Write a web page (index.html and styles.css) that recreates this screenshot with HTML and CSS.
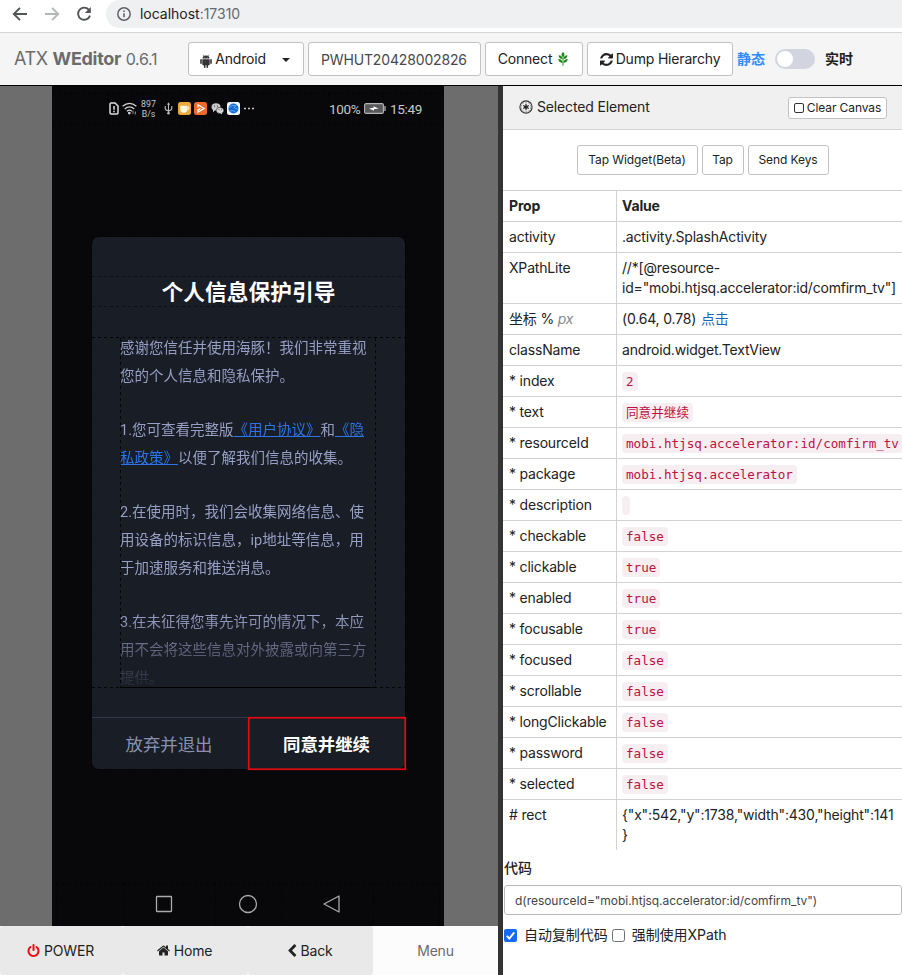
FILE: index.html
```html
<!DOCTYPE html>
<html lang="zh-CN">
<head>
<meta charset="utf-8">
<title>ATX WEditor</title>
<link rel="stylesheet" href="styles.css">
</head>
<body>
<div class="browser">
  <svg class="nav-icon" viewBox="0 0 16 16"><path d="M15 8H2M8 1.8 1.8 8 8 14.2" fill="none" stroke="#505357" stroke-width="1.9"/></svg>
  <svg class="nav-icon" viewBox="0 0 16 16"><path d="M1 8h13M8 1.8 14.2 8 8 14.2" fill="none" stroke="#b4b6b8" stroke-width="1.9"/></svg>
  <svg class="nav-icon" viewBox="0 0 16 16"><path d="M13.2 4.2A6.1 6.1 0 1 0 14 9.6" fill="none" stroke="#505357" stroke-width="1.9"/><path d="M14.8 1v6H8.8z" fill="#505357"/></svg>
  <div class="address">
    <svg class="info" viewBox="0 0 16 16"><circle cx="8" cy="8" r="6.2" fill="none" stroke="#5f6368" stroke-width="1.5"/><path d="M8 7.2v4M8 4.5v1.6" stroke="#5f6368" stroke-width="1.6"/></svg>
    <span class="host">localhost<span class="port">:17310</span></span>
  </div>
</div>
<div class="toolbar">
  <div class="brand">ATX <b>WEditor</b> <small>0.6.1</small></div>
  <button class="btn android">
    <svg class="ic-android" viewBox="0 0 12 14"><path d="M2.5 4.6a3.5 3.2 0 0 1 7 0zM2.3 5.2h7.4v5.3a.8.8 0 0 1-.8.8h-.8v1.9a.8.8 0 0 1-1.6 0v-1.9h-1v1.9a.8.8 0 0 1-1.6 0v-1.9h-.8a.8.8 0 0 1-.8-.8zM.2 5.9a.8.8 0 0 1 1.600 0v3.400a.8.8 0 0 1-1.600 0zM10.200 5.900a.8.8 0 0 1 1.600 0v3.400a.8.8 0 0 1-1.600 0z" fill="#333"/><path d="M3.200.7l1 1.500M8.800.7l-1 1.500" stroke="#333" stroke-width=".6"/><circle cx="4.500" cy="3.200" r=".35" fill="#fff"/><circle cx="7.500" cy="3.200" r=".35" fill="#fff"/></svg>
    <span>Android</span><i class="caret"></i>
  </button>
  <div class="serial">PWHUT20428002826</div>
  <button class="btn connect"><span>Connect</span>
    <svg class="ic-leaf" viewBox="1 0 10 15"><g fill="#1a8a16"><path d="M6 0c2.200 2 2.200 3.800 0 5.500C3.800 3.800 3.800 2 6 0z"/><path d="M1.300 3.600c2.700.1 4 1.600 4.200 4C2.800 7.400 1.300 6 1.300 3.600zM10.700 3.600c-2.700.1-4 1.600-4.200 4 2.700-.2 4.200-1.600 4.200-4zM1 7.600c2.900.1 4.300 1.500 4.500 4.200C2.700 11.700 1 10.100 1 7.600zM11 7.600c-2.900.1-4.300 1.500-4.500 4.200 2.800-.1 4.500-1.700 4.500-4.200z"/></g><path d="M6 5v9.700" stroke="#1a8a16"/></svg>
  </button>
  <button class="btn dump">
    <svg class="ic-fa" viewBox="0 0 1536 1536"><path transform="matrix(1 0 0 -1 0 1408)" d="M1511 480q0 -5 -1 -7q-64 -268 -268 -434.500t-478 -166.500q-146 0 -282.500 55t-243.500 157l-129 -129q-19 -19 -45 -19t-45 19t-19 45v448q0 26 19 45t45 19h448q26 0 45 -19t19 -45t-19 -45l-137 -137q71 -66 161 -102t187 -36q134 0 250 65t186 179q11 17 53 117q8 23 30 23h192q13 0 22.500 -9.500t9.500 -22.500zM1536 1280v-448q0 -26 -19 -45t-45 -19h-448q-26 0 -45 19t-19 45t19 45l138 138q-148 137 -349 137q-134 0 -250 -65t-186 -179q-11 -17 -53 -117q-8 -23 -30 -23h-199q-13 0 -22.500 9.500t-9.500 22.500v7q65 268 270 434.500t480 166.500q146 0 284 -55.500t245 -156.500l130 129q19 19 45 19t45 -19t19 -45z" fill="#222"/></svg>
    <span>Dump Hierarchy</span>
  </button>
  <span class="mode active">静态</span><span class="switch"></span><span class="mode">实时</span>
</div>
<main class="main">
  <section class="left">
    <div class="stage">
      <div class="phone">
        <div class="status">
          <svg class="s-sim" viewBox="0 0 10 13"><path d="M1 2.200Q1 1 2.200 1H6L9 4v6.800Q9 12 7.800 12H2.200Q1 12 1 10.800z" fill="none" stroke="#ddd" stroke-width="1.500"/><path d="M5 4v3.700M5 8.700v1.500" stroke="#ddd" stroke-width="1.500"/></svg>
          <svg class="s-wifi" viewBox="0 0 15 13"><path d="M.6 4.300Q7.500-1.500 14.400 4.300M2.700 6.900Q7.500 2.800 12.300 6.900M4.900 9.200Q7.500 7 10 9.200" fill="none" stroke="#d0d0d0" stroke-width="1.300"/><circle cx="7.300" cy="11.100" r="1.400" fill="#d0d0d0"/><path d="M11 8.800v3M13.300 9.500v3" stroke="#999"/></svg>
          <div class="speed">897<br>B/s</div>
          <svg class="s-usb" viewBox="0 0 9 13"><path d="M4.500 1v10M1.200 4v2.500q0 1.500 3.300 2.500M7.800 4v2.500q0 1.500-3.300 2.500" fill="none" stroke="#bbb" stroke-width="1.100"/><circle cx="4.500" cy="11.300" r="1.300" fill="#bbb"/><path d="M3 2.700 4.500.3 6 2.700z" fill="#bbb"/></svg>
          <svg class="s-app" viewBox="0 0 13 13"><rect width="13" height="13" rx="2.500" fill="#eda83c"/><path d="M2.300 3.800h7v3.700q0 3.200-3.500 3.200T2.300 7.500z" fill="#fff6dd"/><path d="M9 5h1.800v2.200H9" fill="none" stroke="#fff6dd"/></svg>
          <svg class="s-app" viewBox="0 0 13 13"><rect width="13" height="13" rx="2.500" fill="#ee6a2b"/><path d="M4 5.500V2.800l6 3.700-6 3.700V7.800l2.500-1.300" fill="none" stroke="#fff" stroke-width="1.300"/></svg>
          <svg class="s-app" viewBox="0 0 13 13"><ellipse cx="5" cy="4.900" rx="4.500" ry="3.700" fill="#c9c9c9"/><ellipse cx="9" cy="8.500" rx="3.800" ry="3.100" fill="#d8d8d8" stroke="#09090b" stroke-width=".5"/><path d="M2 8v2.500L4 8zM11 11v1.500L9 11z" fill="#ccc"/><g fill="#222"><circle cx="3.500" cy="4" r=".6"/><circle cx="6.500" cy="4" r=".6"/><circle cx="8" cy="7.800" r=".5"/><circle cx="10.300" cy="7.800" r=".5"/></g></svg>
          <svg class="s-app" viewBox="0 0 13 13"><rect width="13" height="13" rx="2.500" fill="#f2f6fa"/><circle cx="6.500" cy="6.500" r="5" fill="#176bd0"/><path d="M2 5.500q3-3 7-2l-2 2 4 2M3 9q3-1.500 5.500 1" fill="none" stroke="#73b6f0" stroke-width=".8"/></svg>
          <svg class="s-dots" viewBox="0 0 10 3"><path d="M0 1.500h2M4 1.500h2M8 1.500h2" stroke="#ccc" stroke-width="1.400"/></svg>
          <span class="pct">100%</span>
          <svg class="s-batt" viewBox="0 0 22 11"><rect x=".6" y=".6" width="18.800" height="9.800" rx="1.500" fill="#58585a" stroke="#b5b5b5" stroke-width="1.100"/><path d="M21 3v5" stroke="#b5b5b5" stroke-width="1.300"/><path d="M5 5.500 9.500 4.800V3.200L14.500 5.500 10 6.200v1.600z" fill="#fff"/></svg>
          <span class="clock">15:49</span>
        </div>
        <div class="dialog">
          <h2 class="title">个人信息保护引导</h2>
          <div class="terms">
            <p>感谢您信任并使用海豚！我们非常重视<br>您的个人信息和隐私保护。</p>
            <p>1.您可查看完整版<a>《用户协议》</a>和<a>《隐<br>私政策》</a>以便了解我们信息的收集。</p>
            <p>2.在使用时，我们会收集网络信息、使<br>用设备的标识信息，ip地址等信息，用<br>于加速服务和推送消息。</p>
            <p>3.在未征得您事先许可的情况下，本应<br>用不会将这些信息对外披露或向第三方<br>提供。</p>
          </div>
          <div class="choices"><div class="decline">放弃并退出</div><div class="accept">同意并继续</div></div>
        </div>
        <div class="softkeys">
          <svg viewBox="0 0 20 20"><rect x="2.500" y="2.500" width="15" height="15" rx=".5"/></svg>
          <svg viewBox="0 0 20 20"><circle cx="10" cy="10" r="8.500"/></svg>
          <svg viewBox="0 0 20 20"><path d="M17 2v16L2 10z" stroke-linejoin="round"/></svg>
        </div>
        <svg class="outlines" viewBox="0 0 392 840" fill="none" stroke="#000" stroke-dasharray="3 3">
          <path d="M0 7.500H392M0 37.500H392M56.500 7V37M276.500 7V37M39.500 150.500H353.500V683.500H39.500zM4 797.500H388M4.500 797.500V840M71.500 797V840M163.500 797V840M229.500 797V840M321.500 797V840M387.500 797V840" stroke-opacity=".6"/>
          <path d="M40 190.500H353M40 220.500H353" stroke-opacity=".45"/>
          <path d="M40 251.500H353M68.500 252V601.500M323.500 252V601.500M40 601.500H353M196.500 632V683" stroke-opacity=".8"/>
          <path d="M68 601.500H324" stroke-dasharray="none"/>
          <rect x="196.750" y="631.750" width="156.500" height="51.500" stroke="#e60a12" stroke-width="1.700" stroke-dasharray="none"/>
        </svg>
      </div>
    </div>
    <div class="keys">
      <button class="key"><svg class="ic-fa" viewBox="0 0 1536 1664"><path transform="matrix(1 0 0 -1 0 1536)" d="M1536 640q0 -156 -61 -298t-164 -245t-245 -164t-298 -61t-298 61t-245 164t-164 245t-61 298q0 182 80.500 343t226.500 270q43 32 95.500 25t83.500 -50q32 -42 24.500 -94.500t-49.500 -84.500q-98 -74 -151.500 -181t-53.500 -228q0 -104 40.500 -198.500t109.500 -163.500t163.500 -109.500t198.500 -40.500t198.500 40.500t163.500 109.500t109.500 163.500t40.500 198.500q0 121 -53.500 228t-151.500 181q-42 32 -49.500 84.500t24.500 94.500q31 43 84 50t95 -25q146 -109 226.500 -270t80.500 -343zM896 1408v-640q0 -52 -38 -90t-90 -38t-90 38t-38 90v640q0 52 38 90t90 38t90 -38t38 -90z" fill="#f00a14"/></svg><span>POWER</span></button>
      <button class="key"><svg class="ic-fa" viewBox="0 0 1664 1408"><path transform="matrix(1 0 0 -1 0 1345)" d="M1408 544v-480q0 -26 -19 -45t-45 -19h-384v384h-256v-384h-384q-26 0 -45 19t-19 45v480q0 1 0.500 3t0.500 3l575 474l575 -474q1 -2 1 -6zM1631 613l-62 -74q-8 -9 -21 -11h-3q-13 0 -21 7l-692 577l-692 -577q-12 -8 -24 -7q-13 2 -21 11l-62 74q-8 10 -7 23.500t11 21.500l719 599q32 26 76 26t76 -26l244 -204v195q0 14 9 23t23 9h192q14 0 23 -9t9 -23v-408l219 -182q10 -8 11 -21.500t-7 -23.500z" fill="#222"/></svg><span>Home</span></button>
      <button class="key"><svg class="ic-back" viewBox="0 0 1280 1664"><path transform="matrix(1 0 0 -1 0 1536)" d="M1171 1235l-531 -531l531 -531q19 -19 19 -45t-19 -45l-166 -166q-19 -19 -45 -19t-45 19l-742 742q-19 19 -19 45t19 45l742 742q19 19 45 19t45 -19l166 -166q19 -19 19 -45t-19 -45z" fill="#222"/></svg><span>Back</span></button>
      <button class="key disabled">Menu</button>
    </div>
  </section>
  <div class="gutter"></div>
  <section class="right">
    <div class="panel-head">
      <svg class="ic-sel" viewBox="0 0 14 14"><circle cx="7" cy="7" r="6.100" fill="none" stroke="#333" stroke-width="1.100"/><circle cx="7" cy="7" r="4.900" fill="none" stroke="#777" stroke-width=".8" stroke-dasharray="2 1.080"/><path d="M7 3.800v6.400M4.200 5.400l5.600 3.200M9.800 5.400 4.200 8.600" stroke="#222" stroke-width="1.200"/><circle cx="7" cy="7" r="1.600" fill="#222"/></svg>
      <span>Selected Element</span>
      <button class="btn small"><i class="square"></i><span>Clear Canvas</span></button>
    </div>
    <div class="actions"><button class="btn">Tap Widget(Beta)</button><button class="btn">Tap</button><button class="btn">Send Keys</button></div>
    <table class="props">
      <tr><th>Prop</th><th>Value</th></tr>
      <tr><td>activity</td><td>.activity.SplashActivity</td></tr>
      <tr><td>XPathLite</td><td>//*[@resource-<br><span class="xpath">id="mobi.htjsq.accelerator:id/comfirm_tv"]</span></td></tr>
      <tr><td>坐标 % <i class="px">px</i></td><td>(0.64, 0.78) <a class="tap">点击</a></td></tr>
      <tr><td>className</td><td>android.widget.TextView</td></tr>
      <tr><td>* index</td><td><code>2</code></td></tr>
      <tr><td>* text</td><td><code>同意并继续</code></td></tr>
      <tr><td>* resourceId</td><td><code>mobi.htjsq.accelerator:id/comfirm_tv</code></td></tr>
      <tr><td>* package</td><td><code>mobi.htjsq.accelerator</code></td></tr>
      <tr><td>* description</td><td><code></code></td></tr>
      <tr><td>* checkable</td><td><code>false</code></td></tr>
      <tr><td>* clickable</td><td><code>true</code></td></tr>
      <tr><td>* enabled</td><td><code>true</code></td></tr>
      <tr><td>* focusable</td><td><code>true</code></td></tr>
      <tr><td>* focused</td><td><code>false</code></td></tr>
      <tr><td>* scrollable</td><td><code>false</code></td></tr>
      <tr><td>* longClickable</td><td><code>false</code></td></tr>
      <tr><td>* password</td><td><code>false</code></td></tr>
      <tr><td>* selected</td><td><code>false</code></td></tr>
      <tr><td># rect</td><td>{"x":542,"y":1738,"width":430,"height":141<br>}</td></tr>
    </table>
    <div class="code-label">代码</div>
    <div class="code-input">d(resourceId="mobi.htjsq.accelerator:id/comfirm_tv")</div>
    <div class="checks">
      <svg class="box" viewBox="0 0 13 13"><rect width="13" height="13" rx="2" fill="#1769f5"/><path d="M2.800 6.800 5.300 9.500 10.300 3.300" fill="none" stroke="#fff" stroke-width="1.900"/></svg><span class="lbl">自动复制代码</span>
      <svg class="box" viewBox="0 0 13 13"><rect x=".5" y=".5" width="12" height="12" rx="2" fill="#fff" stroke="#6f6f6f"/></svg><span class="lbl">强制使用XPath</span>
    </div>
  </section>
</main>
</body>
</html>
```
FILE: styles.css
```css
* { box-sizing: border-box; }
body {
  margin: 0; width: 902px; height: 975px; overflow: hidden; background: #fff;
  font: 14px/20px Inter, "Noto Sans CJK SC", sans-serif; color: #222;
  display: flex; flex-direction: column; letter-spacing: -0.18px;
}
svg { display: block; flex: none; }
span { white-space: nowrap; }
button { font: inherit; color: inherit; letter-spacing: inherit; margin: 0; }

.browser { height: 33px; flex: none; display: flex; align-items: flex-start; padding-left: 12px; gap: 16px; border-bottom: 1px solid #d2d3d5; }
.nav-icon { width: 16px; height: 16px; margin-top: 6px; }
.address { flex: 1; height: 28px; margin-left: -2px; border-radius: 14px 0 0 14px; background: #eff0f2; display: flex; align-items: center; padding-left: 10px; gap: 8px; }
.info { width: 16px; height: 16px; }
.host { font-size: 14px; color: #222; letter-spacing: -0.02px; }
.port { color: #66696d; }

.toolbar { height: 53px; flex: none; background: #f5f5f5; border-bottom: 1px solid #000; display: flex; align-items: center; padding-left: 14px; }
.brand { width: 174px; font-size: 18px; color: #6b6b6b; letter-spacing: -0.32px; white-space: nowrap; }
.brand small { font-size: 16px; }
.btn { border: 1px solid #c2c2c2; border-radius: 3px; background: #fff; height: 34px; padding: 0; display: flex; align-items: center; justify-content: center; }
.toolbar .btn { margin-right: 4px; }
.android { width: 116px; }
.ic-android { width: 12px; height: 14px; margin: 3px 3px 0 -2px; }
.caret { margin: 2px 0 0 16px; border: 4px solid transparent; border-top-color: #222; border-bottom: 0; }
.serial { width: 173px; height: 34px; border: 1px solid #c2c2c2; border-radius: 3px; background: #fff; padding: 7px 0 0 12px; color: #484848; margin-right: 4px; white-space: nowrap; letter-spacing: -0.15px; }
.connect { width: 98px; padding-right: 2px; }
.ic-leaf { width: 10px; height: 14px; margin-left: 6px; }
.dump { width: 146px; }
.ic-fa { width: 13px; height: 13px; margin-right: 3px; }
.mode { font-weight: 700; letter-spacing: 0; }
.active { color: #2e8cff; }
.switch { width: 40px; height: 20px; border-radius: 10px; background: #d2d5e0; margin: 0 10px; padding: 2px; }
.switch::before { content: ""; display: block; width: 16px; height: 16px; border-radius: 50%; background: #fff; }

.main { flex: 1; display: flex; min-height: 0; }
.left { width: 498px; display: flex; flex-direction: column; }
.stage { height: 840px; background: #6d6d6d; padding-left: 52px; }
.phone { width: 392px; height: 840px; background: #08080a; position: relative; font-family: Roboto, "Noto Sans CJK SC", sans-serif; letter-spacing: 0; }
.outlines { position: absolute; left: 0; top: 0; width: 392px; height: 840px; }
.status { height: 45px; padding-left: 57px; display: flex; align-items: center; }
.s-sim { width: 10px; height: 13px; }
.s-wifi { width: 15px; height: 13px; margin-left: 3px; }
.speed { width: 19px; margin-left: 2px; font-size: 8.800px; line-height: 10px; color: #c6c6c6; text-align: center; }
.s-usb { width: 9px; height: 13px; margin-left: 6px; }
.s-app { width: 13px; height: 13px; margin-left: 3.300px; }
.s-usb + .s-app { margin-left: 5px; }
.s-dots { width: 10px; height: 3px; margin-left: 4px; }
.pct { font-size: 13.500px; color: #c8c8c8; margin-left: 75px; width: 32px; letter-spacing: -.3px; }
.s-batt { width: 22px; height: 11px; margin-left: 3px; }
.clock { font-size: 13.500px; color: #c8c8c8; margin-left: 4px; letter-spacing: -.3px; }
.dialog { margin: 106px 0 0 40px; width: 313px; height: 532px; border-radius: 7px; background: #191d26; display: flex; flex-direction: column; }
.title { margin: 41px 0 0; font-size: 21.700px; line-height: 30px; font-weight: 700; color: #fff; text-align: center; letter-spacing: .05px; }
.terms { height: 360px; margin: 27px 0 0 28px; width: 256px; font-size: 14.500px; line-height: 28px; color: #969fc4; white-space: nowrap; -webkit-mask-image: linear-gradient(#000 280px, transparent 358px); mask-image: linear-gradient(#000 280px, transparent 358px); }
.terms p { margin: 0 0 26px; }
.terms p:last-child { margin: 0; }
.terms a { color: #2c74e8; text-decoration: underline; }
.choices { margin-top: auto; height: 52px; border-top: 1px solid #30364c; display: flex; font-size: 17.400px; line-height: 54px; text-align: center; }
.decline { width: 154px; color: #8991b2; }
.accept { flex: 1; color: #fff; font-weight: 700; padding-left: 2px; }
.softkeys { margin-top: 125px; padding: 0 102px; display: flex; justify-content: space-between; }
.softkeys svg { width: 20px; height: 20px; fill: none; stroke: #aaa; stroke-width: 1.300; }
.keys { height: 49px; display: flex; background: #fcfcfc; }
.key { width: 125px; border: 0; border-radius: 3px; padding: 0 2px 0 0; background: #e9e9e9; display: flex; align-items: center; justify-content: center; }
.key:first-child { width: 123px; }
.key .ic-fa { margin-right: 4px; }
.disabled { background: #fcfcfc; color: #6b6b6b; padding: 0; }
.ic-back { width: 10px; height: 13px; margin-right: 4px; }
.gutter { width: 5px; background: #333; }

.right { flex: 1; min-width: 0; overflow: hidden; }
.panel-head { height: 44px; background: #f0f0f0; border-bottom: 1px solid #d4d4d4; display: flex; align-items: center; padding-left: 16px; padding-bottom: 1px; }
.panel-head > span { letter-spacing: -0.15px; }
.ic-sel { width: 14px; height: 14px; margin-right: 4px; }
.small { margin: 2px 15px 0 auto; width: 99px; height: 22px; font-size: 12px; letter-spacing: -0.1px; }
.square { width: 10px; height: 10px; border: 1px solid #333; border-radius: 2px; margin-right: 3px; }
.actions { height: 60px; display: flex; justify-content: center; align-items: center; gap: 4px; font-size: 12px; letter-spacing: -0.1px; }
.actions .btn { height: 30px; width: 121px; }
.actions .btn:nth-child(2) { width: 42px; }
.actions .btn:nth-child(3) { width: 81px; }
.props { border-collapse: separate; border-spacing: 0; table-layout: fixed; width: 399px; }
.props th, .props td { text-align: left; vertical-align: top; border-top: 1px solid #d2d2d2; padding: 5px; line-height: 20px; white-space: nowrap; }
.props th { font-weight: 700; }
.props th:first-child { width: 114px; }
.props tr > :first-child { border-right: 1px solid #d2d2d2; padding-left: 6px; }
.props code { font: 12.600px/19px "DejaVu Sans Mono", "Noto Sans CJK SC", monospace; letter-spacing: 0; color: #bd1144; background: #f7eef1; border-radius: 4px; padding: 0 4px; display: inline-block; height: 19px; vertical-align: top; margin-top: 1px; }
.xpath { letter-spacing: -0.2px; }
.px { color: #888; }
.tap { color: #1b66b8; margin-left: 1px; }
.code-label { margin: 7px 0 8px 1px; font-weight: 500; font-family: "Noto Sans CJK SC", sans-serif; letter-spacing: 0; }
.code-input { margin-left: 1px; height: 30px; border: 1px solid #bbb; border-radius: 3px; padding: 5px 10px 0; font-size: 12px; color: #444; white-space: nowrap; letter-spacing: -0.04px; }
.checks { margin-top: 10px; padding-left: 1px; display: flex; align-items: center; letter-spacing: 0; }
.box { width: 13px; height: 13px; }
.lbl { margin: 0 4px 0 7px; letter-spacing: -0.05px; }
```
